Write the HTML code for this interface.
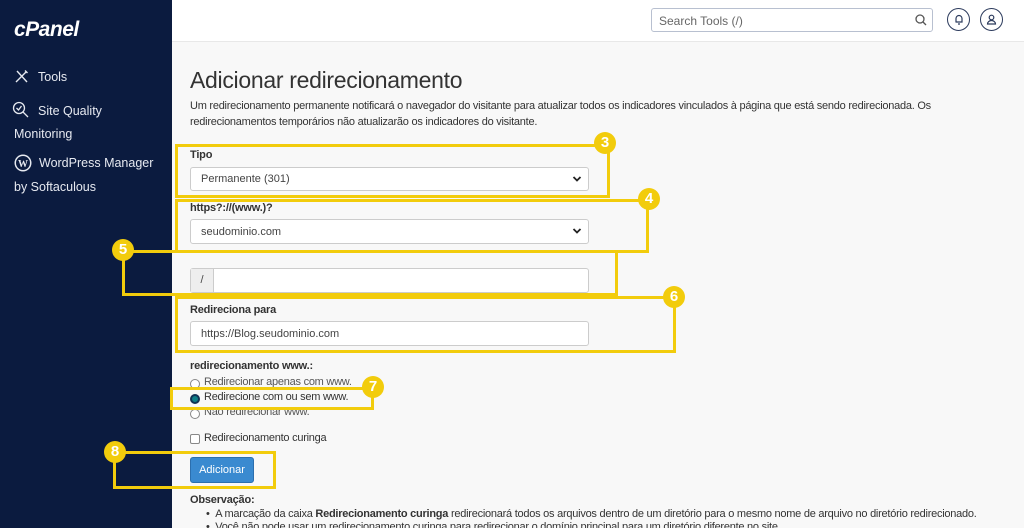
<!DOCTYPE html>
<html style="width:1024px;height:528px;overflow:hidden;background:#f8f8f8"><head><meta charset="utf-8"><style>
*{box-sizing:border-box;margin:0;padding:0}
body{width:1024px;height:528px;overflow:hidden;background:#f8f8f8;font-family:"Liberation Sans",sans-serif;position:relative;color:#333}
.abs{position:absolute}
#side{left:0;top:0;width:172px;height:528px;background:#0b1b3f;color:#e6e9f0;font-size:12.5px}
#top{left:172px;top:0;width:852px;height:42px;background:#fff;border-bottom:1px solid #e8e8e8}
.t{font-size:11px;letter-spacing:-0.25px;white-space:nowrap}
.lbl{font-size:11px;font-weight:bold;letter-spacing:-0.2px}
.sel{background:#fff;border:1px solid #ccc;border-radius:3px;font-size:11px;padding-left:10px;display:flex;align-items:center;color:#444}
.y{border:3px solid #f2cc0c}
.b{width:22px;height:22px;border-radius:50%;background:#f2cc0c;color:#fff;font-weight:bold;font-size:15px;text-align:center;line-height:22px}
.car{position:absolute;right:6px;top:6px}
.radio{width:10px;height:10px;border:1px solid #888;border-radius:50%;background:#fff}
</style></head><body>
<div id="side" class="abs">
 <div class="abs" style="left:14px;top:18px;font-size:21px;font-weight:bold;font-style:italic;color:#fff;letter-spacing:-0.5px">cPanel</div>
 <svg class="abs" style="left:14px;top:69px" width="15" height="15" viewBox="0 0 15 15" fill="none" stroke="#e6e9f0" stroke-width="1.4"><path d="M2 13L12 3M3 2l10 11M11 1.5l2.5 2.5"/></svg>
 <div class="abs" style="left:38px;top:70px">Tools</div>
 <svg class="abs" style="left:12px;top:101px" width="18" height="18" viewBox="0 0 18 18" fill="none" stroke="#e6e9f0" stroke-width="1.3"><circle cx="7" cy="7" r="5.5"/><path d="M11 11l5 5M4.5 7l2 2 3-4"/></svg>
 <div class="abs" style="left:38px;top:104px">Site Quality</div>
 <div class="abs" style="left:14px;top:127px">Monitoring</div>
 <svg class="abs" style="left:14px;top:154px" width="18" height="18" viewBox="0 0 18 18"><circle cx="9" cy="9" r="8.5" fill="#e6e9f0"/><circle cx="9" cy="9" r="7" fill="#0b1b3f"/><text x="9" y="13" font-size="10" font-weight="bold" fill="#e6e9f0" text-anchor="middle" font-family="Liberation Serif">W</text></svg>
 <div class="abs" style="left:39px;top:156px">WordPress Manager</div>
 <div class="abs" style="left:14px;top:180px">by Softaculous</div>
</div>
<div id="top" class="abs">
 <div class="abs" style="left:479px;top:8px;width:282px;height:24px;border:1px solid #b8c0d0;border-radius:3px;font-size:12px;color:#666;padding:5px 7px">Search Tools (/)</div>
 <svg class="abs" style="left:743px;top:14px" width="12" height="12" viewBox="0 0 12 12" fill="none" stroke="#555" stroke-width="1.3"><circle cx="5" cy="5" r="4"/><path d="M8 8l3 3"/></svg>
 <div class="abs" style="left:775px;top:8px;width:23px;height:23px;border:1.3px solid #2b3a5c;border-radius:50%"></div>
 <svg class="abs" style="left:782px;top:14px" width="10" height="11" viewBox="0 0 10 11" fill="none" stroke="#2b3a5c" stroke-width="1.2"><path d="M2 8V4.5a3 3 0 016 0V8H1.5h7M4 10h2"/></svg>
 <div class="abs" style="left:808px;top:8px;width:23px;height:23px;border:1.3px solid #2b3a5c;border-radius:50%"></div>
 <svg class="abs" style="left:814px;top:14px" width="11" height="11" viewBox="0 0 11 11" fill="none" stroke="#2b3a5c" stroke-width="1.2"><circle cx="5.5" cy="3.5" r="2.3"/><path d="M1.5 10a4 3.5 0 018 0z"/></svg>
</div>

<div class="abs" style="left:190px;top:67px;font-size:23px;color:#333;letter-spacing:-0.3px">Adicionar redirecionamento</div>
<div class="abs t" style="left:190px;top:98px;line-height:16px">Um redirecionamento permanente notificará o navegador do visitante para atualizar todos os indicadores vinculados à página que está sendo redirecionada. Os<br>redirecionamentos temporários não atualizarão os indicadores do visitante.</div>

<div class="abs lbl" style="left:190px;top:149px">Tipo</div>
<div class="abs sel" style="left:190px;top:167px;width:399px;height:24px">Permanente (301)<svg class="car" width="10" height="10" viewBox="0 0 10 10" fill="none" stroke="#222" stroke-width="1.8"><path d="M1.5 3l3.5 3.5 3.5-3.5"/></svg></div>

<div class="abs lbl" style="left:190px;top:202px">https?://(www.)?</div>
<div class="abs sel" style="left:190px;top:219px;width:399px;height:25px">seudominio.com<svg class="car" width="10" height="10" viewBox="0 0 10 10" fill="none" stroke="#222" stroke-width="1.8"><path d="M1.5 3l3.5 3.5 3.5-3.5"/></svg></div>

<div class="abs sel" style="left:190px;top:268px;width:399px;height:25px;padding:0"><div style="width:23px;height:100%;background:#eee;border-right:1px solid #ccc;text-align:center;line-height:23px">/</div></div>

<div class="abs lbl" style="left:190px;top:304px">Redireciona para</div>
<div class="abs sel" style="left:190px;top:321px;width:399px;height:25px">https://Blog.seudominio.com</div>

<div class="abs lbl" style="left:190px;top:360px;font-weight:bold">redirecionamento www.:</div>
<div class="abs radio" style="left:190px;top:379px"></div><div class="abs t" style="left:204px;top:376px;color:#555">Redirecionar apenas com www.</div>
<div class="abs radio" style="left:190px;top:394px;background:#0e7f88;border:2px solid #135"></div><div class="abs t" style="left:204px;top:391px">Redirecione com ou sem www.</div>
<div class="abs radio" style="left:190px;top:409px"></div><div class="abs t" style="left:204px;top:406px;color:#555">Não redirecionar www.</div>
<div class="abs" style="left:190px;top:434px;width:10px;height:10px;border:1px solid #888;border-radius:2px;background:#fff"></div><div class="abs t" style="left:204px;top:432px">Redirecionamento curinga</div>

<div class="abs" style="left:190px;top:457px;width:64px;height:26px;background:#3a8ad0;border:1px solid #2c6fae;border-radius:3px;color:#fff;font-size:11px;text-align:center;line-height:24px">Adicionar</div>

<div class="abs lbl" style="left:190px;top:494px">Observação:</div>
<div class="abs t" style="left:206px;top:508px">• &nbsp;A marcação da caixa <b>Redirecionamento curinga</b> redirecionará todos os arquivos dentro de um diretório para o mesmo nome de arquivo no diretório redirecionado.</div>
<div class="abs t" style="left:206px;top:521px">• &nbsp;Você não pode usar um redirecionamento curinga para redirecionar o domínio principal para um diretório diferente no site.</div>

<div class="abs y" style="left:175px;top:144px;width:435px;height:54px"></div>
<div class="abs y" style="left:175px;top:199px;width:474px;height:54px"></div>
<div class="abs y" style="left:122px;top:250px;width:496px;height:46px"></div>
<div class="abs y" style="left:175px;top:296px;width:501px;height:57px"></div>
<div class="abs y" style="left:170px;top:387px;width:204px;height:23px"></div>
<div class="abs y" style="left:113px;top:451px;width:163px;height:38px"></div>
<div class="abs b" style="left:594px;top:132px">3</div>
<div class="abs b" style="left:638px;top:188px">4</div>
<div class="abs b" style="left:112px;top:239px">5</div>
<div class="abs b" style="left:663px;top:286px">6</div>
<div class="abs b" style="left:362px;top:376px">7</div>
<div class="abs b" style="left:104px;top:441px">8</div>
</body></html>
